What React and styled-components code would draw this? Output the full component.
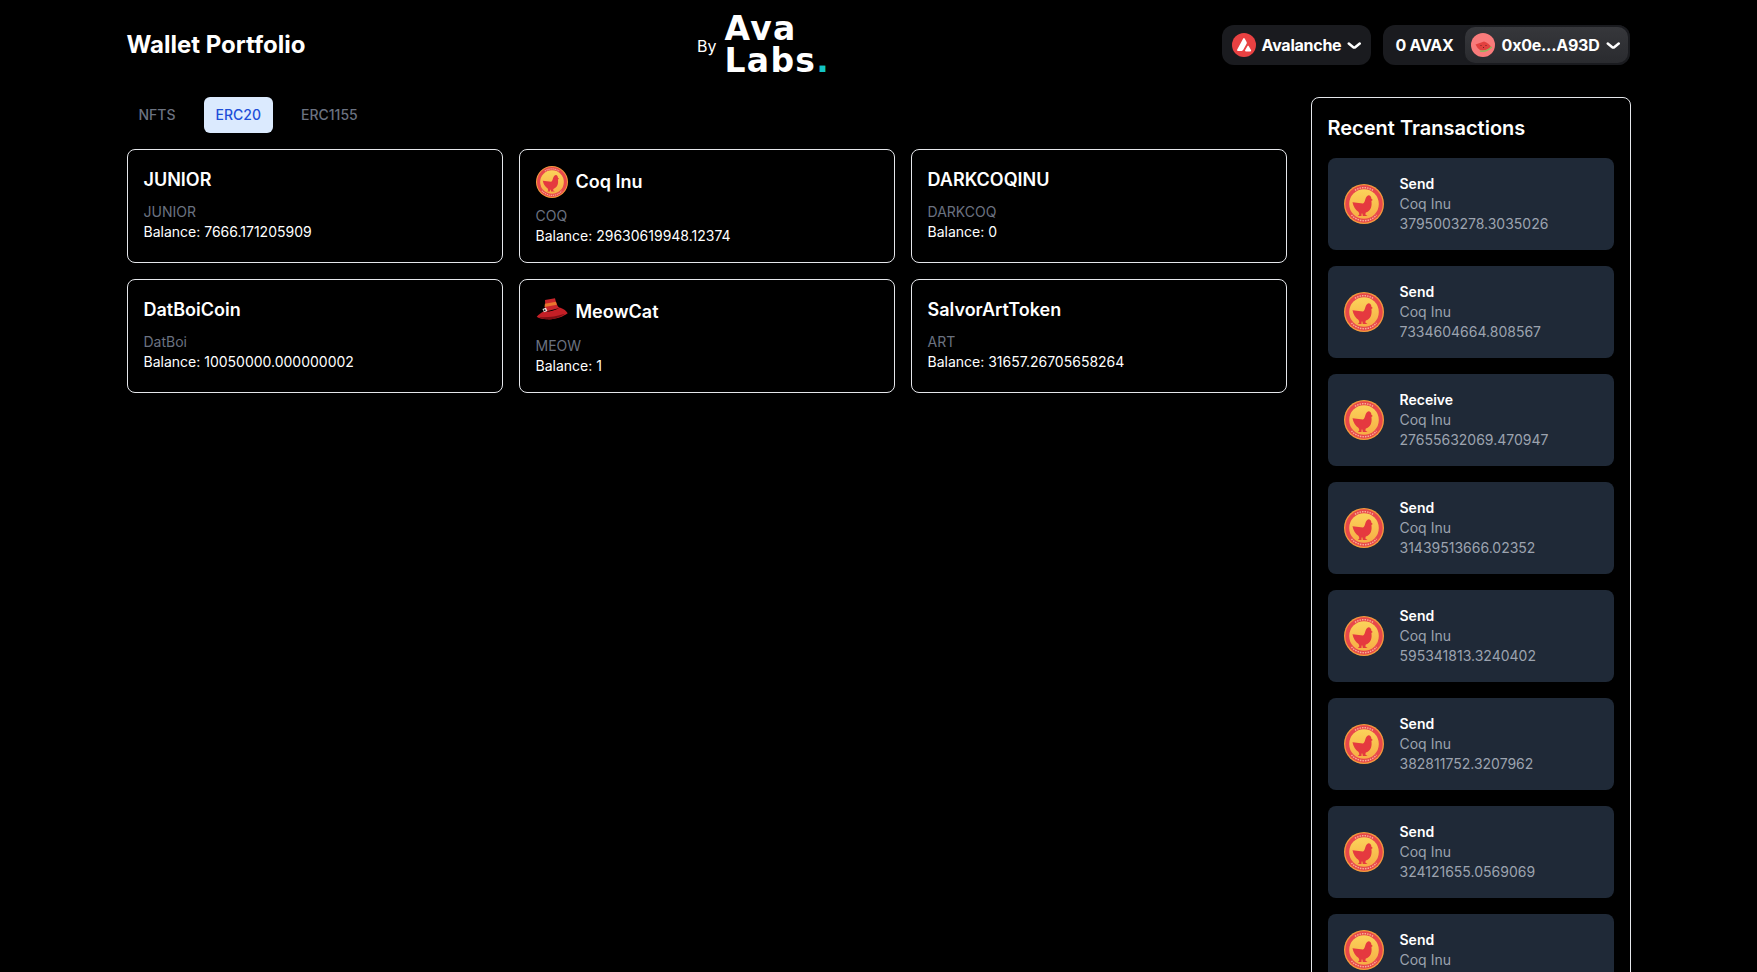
import styled, { createGlobalStyle } from "styled-components"

const GlobalStyle = createGlobalStyle`
  html, body {
    margin: 0;
    height: 100%;
    overflow: hidden;
    background: #000;
  }
  * { box-sizing: border-box; }
  body {
    font-family: Inter, "Liberation Sans", sans-serif;
    color: #fff;
  }
`

const Page = styled.div`
  max-width: 1536px;
  height: 972px;
  margin: 0 auto;
  padding: 0 16px;
  overflow: hidden;
`
const Header = styled.header`
  height: 97px;
  padding-bottom: 7px;
  display: flex;
  align-items: center;
  justify-content: space-between;
  white-space: nowrap;
`
const PageTitle = styled.h1`
  margin: 0;
  font-size: 24px;
  line-height: 32px;
  font-weight: 700;
`
const Brand = styled.div`
  display: flex;
  align-items: center;
  gap: 8px;
  font-size: 16px;
`
const BrandBy = styled.span`
  margin-top: 2px;
`
const BrandName = styled.div`
  font-family: "DejaVu Sans", Inter, sans-serif;
  font-size: 33px;
  line-height: 32px;
  font-weight: 700;
  letter-spacing: 1.3px;
`
const BrandDot = styled.span`
  color: #14c4c4;
`
const Wallet = styled.div`
  display: flex;
  gap: 12px;
  letter-spacing: -0.25px;
`
const ChainButton = styled.div`
  height: 40px;
  padding: 0 10px;
  display: flex;
  align-items: center;
  gap: 6px;
  border-radius: 12px;
  background: #1a1b1f;
  font-size: 16px;
  font-weight: 700;
`
const AccountBox = styled.div`
  height: 40px;
  display: flex;
  align-items: center;
  gap: 9px;
  padding-left: 12px;
  border-radius: 12px;
  background: #1a1b1f;
  font-size: 16px;
  font-weight: 700;
`
const AccountButton = styled.div`
  height: 40px;
  padding: 0 8px 0 6px;
  display: flex;
  align-items: center;
  gap: 7px;
  border: 2px solid #1a1b1f;
  border-radius: 12px;
  background: linear-gradient(#36373b, #2a2b2f);
`
const Avatar = styled.span`
  width: 24px;
  height: 24px;
  border-radius: 50%;
  background: #f97b7b;
`
const Main = styled.main`
  display: flex;
  gap: 24px;
  align-items: flex-start;
`
const Left = styled.section`
  flex: 1;
`
const Tabs = styled.nav`
  display: flex;
  gap: 16px;
  margin-bottom: 16px;
`
const Tab = styled.div`
  height: 36px;
  padding: 0 12px 1px;
  display: flex;
  align-items: center;
  border-radius: 6px;
  font-size: 14px;
  font-weight: 500;
  color: ${p => (p.$active ? "#1d4ed8" : "#6b7280")};
  background: ${p => (p.$active ? "#dbeafe" : "transparent")};
`
const Grid = styled.div`
  display: grid;
  grid-template-columns: repeat(3, 1fr);
  gap: 16px;
`
const Card = styled.article`
  padding: 16px;
  border: 1px solid #e5e7eb;
  border-radius: 8px;
`
const CardHead = styled.div`
  display: flex;
  align-items: center;
  gap: 8px;
  margin-bottom: 8px;
`
const CardTitle = styled.h2`
  margin: 0;
  font-size: 18px;
  line-height: 28px;
  font-weight: 600;
`
const Symbol = styled.div`
  font-size: 14px;
  line-height: 20px;
  color: #6b7280;
`
const Balance = styled.div`
  font-size: 14px;
  line-height: 20px;
`
const Panel = styled.aside`
  width: 320px;
  flex: none;
  padding: 16px;
  border: 1px solid #e5e7eb;
  border-radius: 8px;
`
const PanelTitle = styled.h2`
  margin: 0 0 16px;
  font-size: 20px;
  line-height: 28px;
  font-weight: 600;
`
const TxList = styled.div`
  display: flex;
  flex-direction: column;
  gap: 16px;
`
const TxRow = styled.div`
  display: flex;
  align-items: center;
  gap: 16px;
  padding: 16px;
  border-radius: 8px;
  background: #1f2937;
`
const TxType = styled.div`
  font-size: 14px;
  line-height: 20px;
  font-weight: 600;
`
const TxInfo = styled.div`
  font-size: 14px;
  line-height: 20px;
  color: #9ca3af;
`

const cards = [
  { name: "JUNIOR", symbol: "JUNIOR", balance: "7666.171205909" },
  { name: "Coq Inu", symbol: "COQ", balance: "29630619948.12374", icon: "coq" },
  { name: "DARKCOQINU", symbol: "DARKCOQ", balance: "0" },
  { name: "DatBoiCoin", symbol: "DatBoi", balance: "10050000.000000002" },
  { name: "MeowCat", symbol: "MEOW", balance: "1", icon: "meow" },
  { name: "SalvorArtToken", symbol: "ART", balance: "31657.26705658264" },
]

const transactions = [
  { type: "Send", amount: "3795003278.3035026" },
  { type: "Send", amount: "7334604664.808567" },
  { type: "Receive", amount: "27655632069.470947" },
  { type: "Send", amount: "31439513666.02352" },
  { type: "Send", amount: "595341813.3240402" },
  { type: "Send", amount: "382811752.3207962" },
  { type: "Send", amount: "324121655.0569069" },
  { type: "Send" },
]

const Chevron = () => (
  <svg width="14" height="7" viewBox="0 0 14 7" fill="none">
    <path
      d="M12.75 1.54L8.52 5C7.78 5.61 6.72 5.61 5.98 5L1.75 1.54"
      stroke="currentColor"
      strokeWidth="2.5"
      strokeLinecap="round"
      strokeLinejoin="round"
    />
  </svg>
)

const AvalancheIcon = () => (
  <svg width="24" height="24" viewBox="0 0 24 24">
    <circle cx="12" cy="12" r="12" fill="#e84142" />
    <path d="M11.2 5.6c.4-.7 1.1-.7 1.5 0l1.9 3.4c.3.6.3 1.2 0 1.8l-3.5 6.3c-.3.5-.8.8-1.4.8H5.9c-.7 0-1.1-.7-.7-1.3z" fill="#fff" />
    <path d="M15.4 13.3c.3-.6 1-.6 1.4 0l2.2 3.8c.3.6 0 1.3-.7 1.3h-4.4c-.7 0-1.1-.7-.7-1.3z" fill="#fff" />
  </svg>
)

const Watermelon = () => (
  <svg width="24" height="24" viewBox="0 0 24 24">
    <path d="M4.500 11.500L13 8.500Q18 10 20 14Q14 19 9 17Q6 15 4.500 11.500z" fill="#e2403f" />
    <path d="M20.300 14.300Q15 19.500 9.500 18" fill="none" stroke="#8fb85a" strokeWidth="1.500" strokeLinecap="round" />
    <circle cx="10" cy="12.500" r=".5" fill="#4a1a1a" />
    <circle cx="12.500" cy="14.500" r=".5" fill="#4a1a1a" />
    <circle cx="15" cy="12.500" r=".5" fill="#4a1a1a" />
  </svg>
)

const CoqIcon = ({ size }) => (
  <svg width={size} height={size} viewBox="0 0 40 40">
    <defs>
      <linearGradient id="coqFill" x1="0" y1="0" x2="0" y2="1">
        <stop offset="0" stopColor="#fbd35a" />
        <stop offset="1" stopColor="#f7ad45" />
      </linearGradient>
    </defs>
    <circle cx="20" cy="20" r="20" fill="#f59a3c" />
    <circle cx="20" cy="20" r="18.700" fill="#e8484a" />
    <circle cx="20" cy="20" r="14.800" fill="url(#coqFill)" />
    <path d="M11 6.300A16.500 16.500 0 0 1 29 6.300" fill="none" stroke="#f9c3a4" strokeWidth="1.400" strokeDasharray="1.500 1" opacity=".85" />
    <path d="M7.500 31A16.500 16.500 0 0 0 32.500 31" fill="none" stroke="#f9c3a4" strokeWidth="1.400" strokeDasharray="1.500 1" opacity=".85" />
    <path
      d="M8.500 18.300L19 19.600C20.500 18.500 21 16.500 21.500 14.700C22.300 12.800 23.500 11.300 25 11.300C26.500 11.500 27.400 13 27.400 14.700L28.800 16L27.400 17C27.800 19.500 27.700 22 26.900 23.900C25.700 26.500 23.800 27.800 21.800 28.600L21.300 30.400L23.500 32H18.800L18.400 29.600H17.600L17.500 32H14L15.400 30.300L14.600 28C11.500 26 9.300 22.500 8.500 18.300z"
      fill="#e5393f"
    />
  </svg>
)

const MeowIcon = () => (
  <svg width="32" height="32" viewBox="0 0 32 32">
    <path d="M9 4L19 2.300C20 7 21 10 23.500 12L8 16C9 12 9.500 8 9 4z" fill="#c8252b" />
    <path d="M8.900 7.800L20 5.800L20.900 8.800L8.600 11z" fill="#e8762d" />
    <path d="M.7 20.700C3 18 5 17 7.500 15.500C12 16 18 15 23.800 11.500C28 13 30.500 15 31.700 17.300C27 21 18 24 10.700 23.300C6 23 2.500 22 .7 20.700z" fill="#c41f26" />
    <path d="M3 21C9 22 19 21 29 17.800C24 21.300 17 23.800 10.700 23.300C7.500 23.100 5 22.300 3 21z" fill="#7d0f14" />
    <path d="M6.500 13L10 11.800L11.300 15L8 16.300z" fill="#f4f1ec" />
    <circle cx="8.600" cy="14.300" r="1" fill="#1b1b1b" />
  </svg>
)

const cardIcons = { coq: <CoqIcon size={32} />, meow: <MeowIcon /> }

const App = () => {
  return (
    <Page>
      <GlobalStyle />
      <Header>
        <PageTitle>Wallet Portfolio</PageTitle>
        <Brand>
          <BrandBy>By</BrandBy>
          <BrandName>
            Ava
            <br />
            Labs<BrandDot>.</BrandDot>
          </BrandName>
        </Brand>
        <Wallet>
          <ChainButton>
            <AvalancheIcon />
            Avalanche
            <Chevron />
          </ChainButton>
          <AccountBox>
            0 AVAX
            <AccountButton>
              <Avatar>
                <Watermelon />
              </Avatar>
              0x0e...A93D
              <Chevron />
            </AccountButton>
          </AccountBox>
        </Wallet>
      </Header>
      <Main>
        <Left>
          <Tabs>
            <Tab>NFTS</Tab>
            <Tab $active>ERC20</Tab>
            <Tab>ERC1155</Tab>
          </Tabs>
          <Grid>
            {cards.map(card => (
              <Card key={card.name}>
                <CardHead>
                  {card.icon && cardIcons[card.icon]}
                  <CardTitle>{card.name}</CardTitle>
                </CardHead>
                <Symbol>{card.symbol}</Symbol>
                <Balance>Balance: {card.balance}</Balance>
              </Card>
            ))}
          </Grid>
        </Left>
        <Panel>
          <PanelTitle>Recent Transactions</PanelTitle>
          <TxList>
            {transactions.map((tx, i) => (
              <TxRow key={i}>
                <CoqIcon size={40} />
                <div>
                  <TxType>{tx.type}</TxType>
                  <TxInfo>Coq Inu</TxInfo>
                  {tx.amount && <TxInfo>{tx.amount}</TxInfo>}
                </div>
              </TxRow>
            ))}
          </TxList>
        </Panel>
      </Main>
    </Page>
  )
}

export default App
